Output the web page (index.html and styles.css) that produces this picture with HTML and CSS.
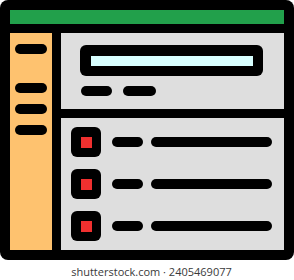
FILE: index.html
```html
<!DOCTYPE html>
<html>
<head>
<meta charset="utf-8">
<link rel="stylesheet" href="styles.css">
</head>
<body>
<div class="frame">
  <div class="titlebar"></div>
  <div class="body">
    <div class="sidebar">
      <span class="pill side first"></span>
      <span class="pill side second"></span>
      <span class="pill side"></span>
      <span class="pill side"></span>
    </div>
    <div class="main">
      <div class="header">
        <div class="search"><div class="search-field"></div></div>
        <div class="tags">
          <span class="pill tag"></span>
          <span class="pill tag tag2"></span>
        </div>
      </div>
      <div class="list">
        <div class="row"><span class="check"><span class="mark"></span></span><span class="pill short"></span><span class="pill long"></span></div>
        <div class="row"><span class="check"><span class="mark"></span></span><span class="pill short"></span><span class="pill long"></span></div>
        <div class="row"><span class="check"><span class="mark"></span></span><span class="pill short"></span><span class="pill long"></span></div>
      </div>
    </div>
  </div>
</div>
<div class="credit">shutterstock.com · 2405469077</div>
</body>
</html>
```
FILE: styles.css
```css
html, body {
  margin: 0;
  padding: 0;
  background: #ffffff;
}
body {
  width: 294px;
  height: 280px;
  overflow: hidden;
}
.frame {
  width: 294px;
  height: 260px;
  box-sizing: border-box;
  background: #000;
  border-radius: 8px;
  padding: 10px;
  display: flex;
  flex-direction: column;
  gap: 9px;
}
.titlebar {
  height: 14px;
  background: #22a04b;
  flex: none;
}
.body {
  flex: 1;
  display: grid;
  grid-template-columns: 42px 1fr;
  column-gap: 9px;
}
.sidebar {
  background: #fec26f;
  display: flex;
  flex-direction: column;
  align-items: flex-start;
  padding: 11px 0 0 5px;
  gap: 11px;
}
.pill {
  display: block;
  height: 10px;
  border-radius: 5px;
  background: #000;
  flex: none;
}
.side {
  width: 32px;
}
.side.second {
  margin-top: 18px;
}
.main {
  display: flex;
  flex-direction: column;
  gap: 9px;
}
.header {
  height: 76px;
  background: #dedede;
  padding: 12px 0 0 19px;
  box-sizing: border-box;
}
.search {
  width: 183px;
  height: 31px;
  box-sizing: border-box;
  background: #000;
  border-radius: 6px;
  padding: 11px 10px 10px 11px;
}
.search-field {
  height: 10px;
  background: #d8ffff;
}
.tags {
  display: flex;
  gap: 11px;
  margin-top: 10px;
  padding-left: 1px;
}
.tag {
  width: 31px;
}
.tag2 {
  width: 33px;
}
.list {
  flex: 1;
  background: #dedede;
  padding: 9px 0 0 10px;
  display: flex;
  flex-direction: column;
  gap: 12px;
}
.row {
  display: flex;
  align-items: center;
  height: 30px;
}
.check {
  width: 30px;
  height: 30px;
  background: #000;
  border-radius: 6px;
  display: flex;
  align-items: center;
  justify-content: center;
  flex: none;
}
.mark {
  width: 11px;
  height: 11px;
  background: #f0302f;
}
.short {
  width: 31px;
  margin-left: 11px;
}
.long {
  width: 121px;
  margin-left: 8px;
}
.credit {
  margin-top: 4px;
  padding-left: 9px;
  text-align: center;
  font-family: "Open Sans", "Noto Sans", sans-serif;
  font-size: 11px;
  line-height: 15px;
  color: #3a3a3a;
}
```
